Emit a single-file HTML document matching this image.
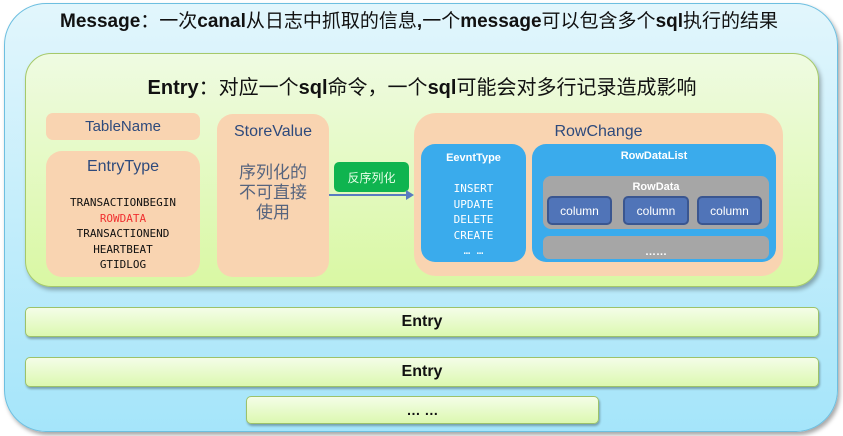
<!DOCTYPE html>
<html><head><meta charset="utf-8"><style>
*{margin:0;padding:0;box-sizing:border-box}
body{width:843px;height:436px;background:#fff;position:relative;overflow:hidden;font-family:"Liberation Sans","Noto Sans CJK SC",sans-serif}
.a{position:absolute}
.c{display:flex;align-items:center;justify-content:center;text-align:center}
.mono{font-family:"DejaVu Sans Mono","Liberation Mono",monospace}
</style></head><body>
<div class="a" style="left:4px;top:3px;width:834px;height:429px;border-radius:42px;border:1.5px solid #6dbfe0;background:linear-gradient(#e2f6fc,#a5e5fa);box-shadow:2px 3px 4px rgba(0,0,0,.35)"></div>
<div class="a" style="left:60px;top:7px;width:740px;height:30px;font-size:19px;line-height:30px;color:#111;white-space:nowrap"><b>Message</b>：一次<b>canal</b>从日志中抓取的信息<b>,</b>一个<b>message</b>可以包含多个<b>sql</b>执行的结果</div>
<div class="a" style="left:25px;top:53px;width:794px;height:234px;border-radius:26px;border:1.5px solid #a5c96a;background:linear-gradient(#effbe2,#d9f8a3);box-shadow:2px 3px 4px rgba(0,0,0,.3)"></div>
<div class="a c" style="left:25px;top:71px;width:794px;height:28px;font-size:20px;color:#111;white-space:nowrap"><span><b>Entry</b>：对应一个<b>sql</b>命令，一个<b>sql</b>可能会对多行记录造成影响</span></div>
<div class="a c" style="left:46px;top:113px;width:154px;height:27px;border-radius:7px;background:#f9d4b1;color:#2e4a7c;font-size:15px">TableName</div>
<div class="a" style="left:46px;top:151px;width:154px;height:126px;border-radius:16px;background:#f9d4b1"></div>
<div class="a c" style="left:46px;top:155px;width:154px;height:24px;color:#2e4a7c;font-size:16px">EntryType</div>
<div class="a mono" style="left:46px;top:195px;width:154px;text-align:center;font-size:11px;line-height:15.5px;color:#111">TRANSACTIONBEGIN<br><span style="color:#f03030">ROWDATA</span><br>TRANSACTIONEND<br>HEARTBEAT<br>GTIDLOG</div>
<div class="a" style="left:217px;top:114px;width:112px;height:163px;border-radius:16px;background:#f9d4b1"></div>
<div class="a c" style="left:217px;top:120px;width:112px;height:24px;color:#2e4a7c;font-size:16px">StoreValue</div>
<div class="a" style="left:217px;top:163px;width:112px;text-align:center;color:#56647e;font-size:17px;line-height:20px">序列化的<br>不可直接<br>使用</div>
<div class="a c" style="left:334px;top:162px;width:75px;height:30px;border-radius:5px;background:#0fb44f;color:#e8ffe8;font-size:12px">反序列化</div>
<div class="a" style="left:329px;top:194px;width:78px;height:1.5px;background:#5a7bc0"></div>
<div class="a" style="left:406px;top:190px;width:0;height:0;border-left:8px solid #5a7bc0;border-top:5px solid transparent;border-bottom:5px solid transparent"></div>
<div class="a" style="left:414px;top:113px;width:369px;height:163px;border-radius:22px;background:#f9d4b1"></div>
<div class="a c" style="left:414px;top:120px;width:369px;height:24px;color:#2e4a7c;font-size:16px">RowChange</div>
<div class="a" style="left:421px;top:144px;width:105px;height:118px;border-radius:14px;background:#3aabec"></div>
<div class="a c" style="left:421px;top:149px;width:105px;height:18px;color:#fff;font-size:11px;font-weight:bold">EevntType</div>
<div class="a mono" style="left:421px;top:181px;width:105px;text-align:center;color:#fff;font-size:11px;line-height:15.5px">INSERT<br>UPDATE<br>DELETE<br>CREATE<br>… …</div>
<div class="a" style="left:532px;top:144px;width:244px;height:118px;border-radius:14px;background:#3aabec"></div>
<div class="a c" style="left:532px;top:148px;width:244px;height:16px;color:#fff;font-size:11px;font-weight:bold">RowDataList</div>
<div class="a" style="left:543px;top:176px;width:226px;height:53px;border-radius:8px;background:#a6a6a6"></div>
<div class="a c" style="left:543px;top:179px;width:226px;height:16px;color:#fff;font-size:11px;font-weight:bold">RowData</div>
<div class="a c" style="left:547px;top:196px;width:65px;height:29px;border-radius:5px;background:#5074b8;border:2px solid #3a5690;color:#fff;font-size:12px">column</div>
<div class="a c" style="left:623px;top:196px;width:66px;height:29px;border-radius:5px;background:#5074b8;border:2px solid #3a5690;color:#fff;font-size:12px">column</div>
<div class="a c" style="left:697px;top:196px;width:65px;height:29px;border-radius:5px;background:#5074b8;border:2px solid #3a5690;color:#fff;font-size:12px">column</div>
<div class="a c" style="left:543px;top:236px;width:226px;height:23px;border-radius:6px;background:#a6a6a6;color:#fff;font-size:11px;font-weight:bold;padding-top:8px">……</div>
<div class="a c" style="left:25px;top:307px;width:794px;height:30px;border-radius:5px;border:1px solid #9cc26a;background:linear-gradient(#f4fde8,#dcf8b0);box-shadow:1px 2px 2px rgba(0,0,0,.3);font-size:16px;font-weight:bold;color:#111">Entry</div>
<div class="a c" style="left:25px;top:357px;width:794px;height:30px;border-radius:5px;border:1px solid #9cc26a;background:linear-gradient(#f4fde8,#dcf8b0);box-shadow:1px 2px 2px rgba(0,0,0,.3);font-size:16px;font-weight:bold;color:#111">Entry</div>
<div class="a c" style="left:246px;top:396px;width:353px;height:28px;border-radius:5px;border:1px solid #9cc26a;background:linear-gradient(#f4fde8,#dcf8b0);box-shadow:1px 2px 2px rgba(0,0,0,.3);font-size:14px;font-weight:bold;color:#111">… …</div>
</body></html>
